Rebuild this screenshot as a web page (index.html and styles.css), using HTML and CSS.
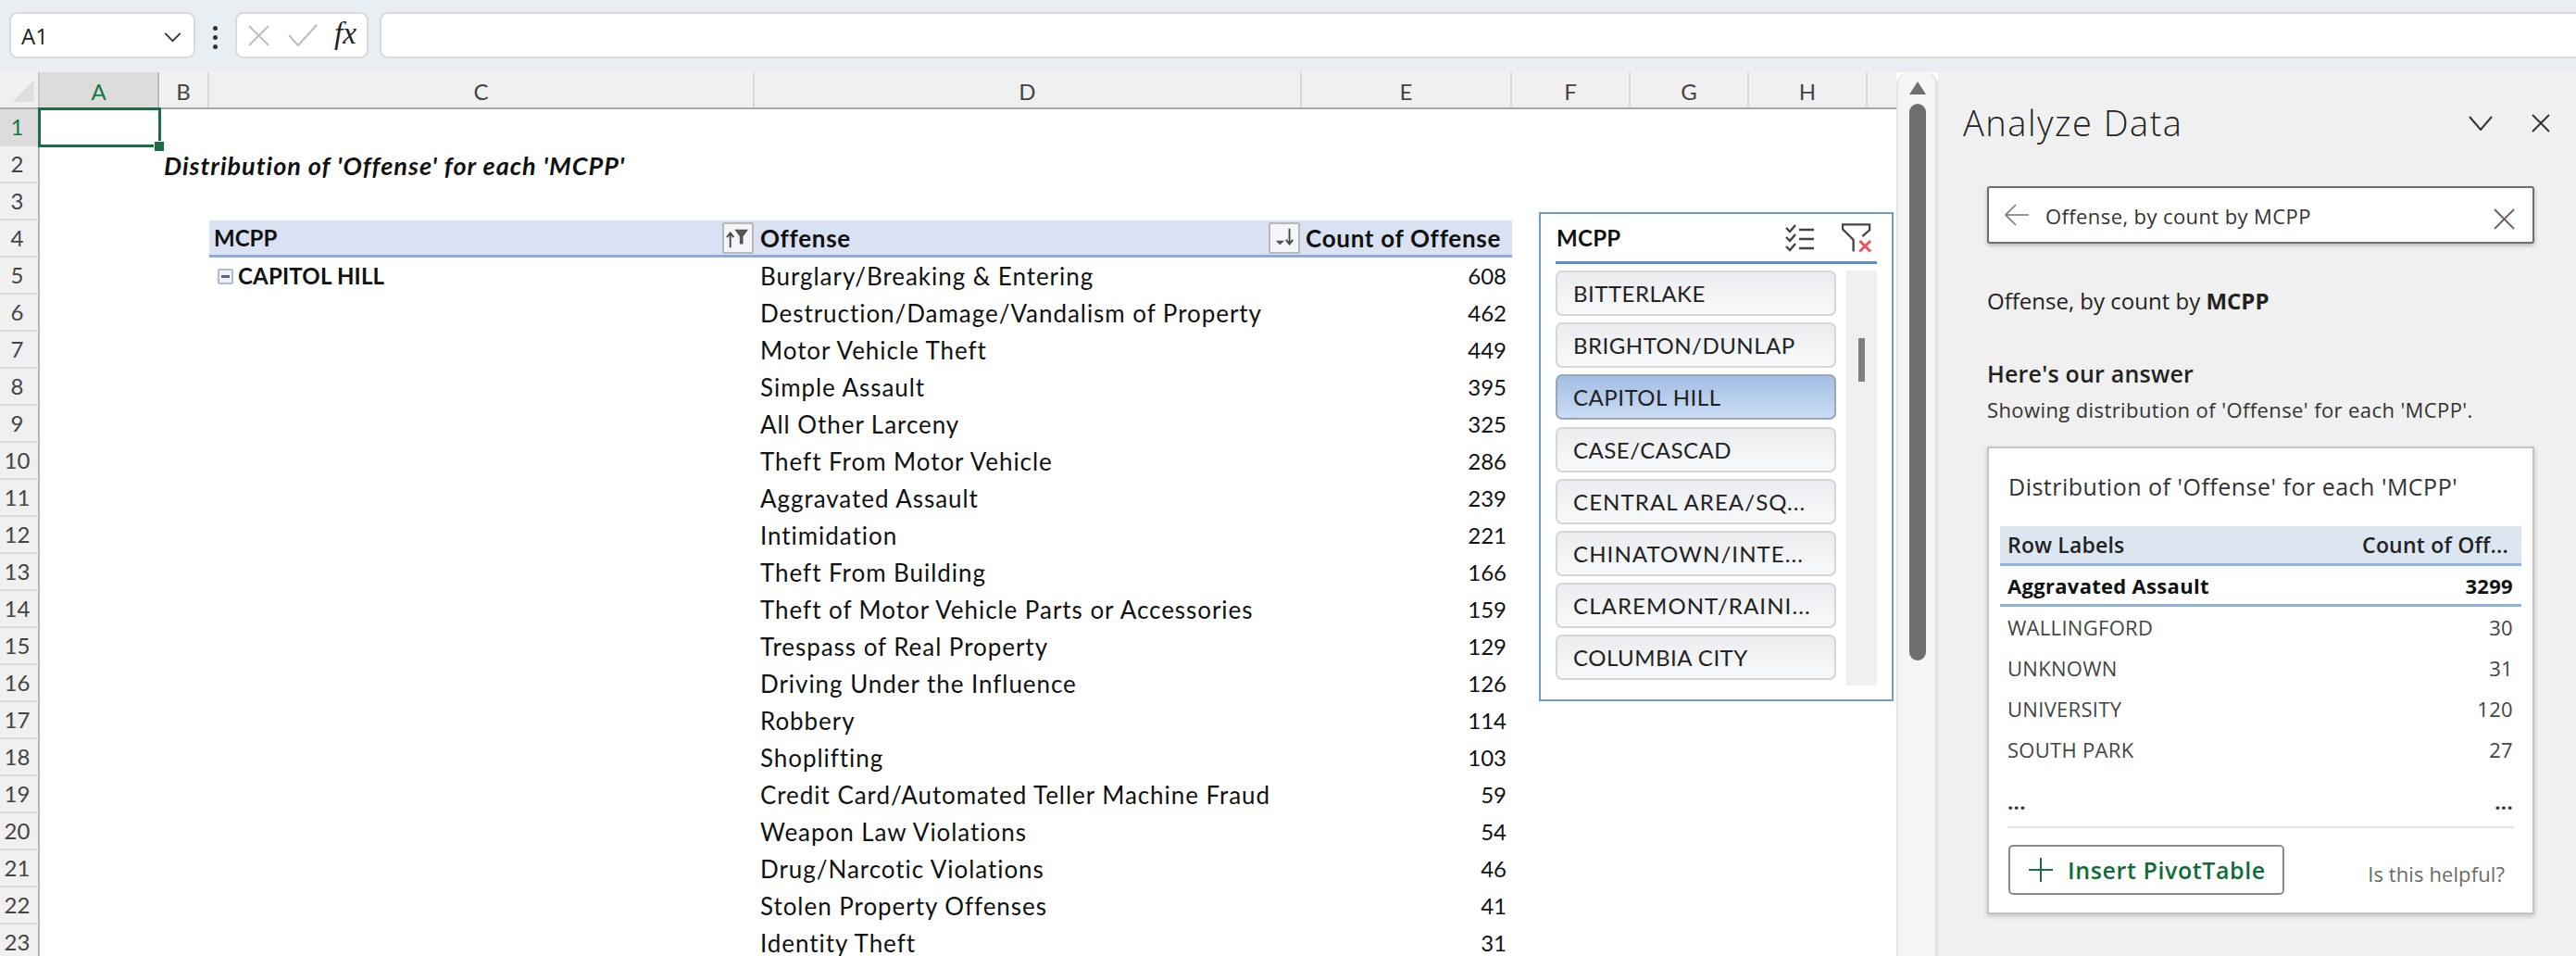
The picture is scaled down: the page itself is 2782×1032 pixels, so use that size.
FILE: index.html
```html
<!DOCTYPE html>
<html lang="en">
<head>
<meta charset="utf-8">
<title>Analyze Data</title>
<link rel="stylesheet" href="styles.css">
</head>
<body>
<header class="fbar">
  <div class="namebox"><span>A1</span>
    <svg class="ico-chev" viewBox="0 0 20 12"><path d="M1 1l9 9 9-9"/></svg>
  </div>
  <div class="dots"><i></i><i></i><i></i></div>
  <div class="fxbox">
    <svg class="ico-x" viewBox="0 0 24 24"><path d="M1 1l22 22M23 1L1 23"/></svg>
    <svg class="ico-check" viewBox="0 0 32 24"><path d="M1 12l10 11L31 1"/></svg>
    <span class="fx">fx</span>
  </div>
  <div class="finput"></div>
</header>
<main class="main">
  <section class="sheet">
    <div class="colhead">
      <div class="corner"><svg viewBox="0 0 24 24"><path d="M24 0v24H0z"/></svg></div>
      <div class="ch cha">A</div><div class="ch chb">B</div><div class="ch chc">C</div><div class="ch chd">D</div><div class="ch che">E</div><div class="ch chf">F</div><div class="ch chf">G</div><div class="ch chf">H</div><div class="ch chi"></div>
    </div>
    <div class="row"><span class="rh rh-on">1</span></div>
    <div class="row"><span class="rh">2</span><span class="gap"></span><span class="title">Distribution of 'Offense' for each 'MCPP'</span></div>
    <div class="row"><span class="rh">3</span></div>
    <div class="row"><span class="rh">4</span><span class="gap"></span>
      <span class="pv pv-c"><b>MCPP</b>
        <span class="fbtn"><svg viewBox="0 0 30 26"><path class="ar" d="M6 24V8M2 12l4-5 4 5"/><path class="fu" d="M11 3h16l-6 8v9h-4v-9z"/></svg></span></span>
      <span class="pv pv-d"><b class="wide">Offense</b>
        <span class="fbtn"><svg viewBox="0 0 30 26"><path class="fu" d="M5 16h10l-5 5z"/><path class="ar" d="M21 2v18M17 15l4 5 4-5"/></svg></span></span>
      <span class="pv pv-e"><b class="wide">Count of Offense</b></span>
    </div>
    <div class="row"><span class="rh">5</span><span class="gap"></span>
      <span class="cc"><span class="minus"></span><b>CAPITOL HILL</b></span><span class="cd">Burglary/Breaking &amp; Entering</span><span class="ce">608</span></div>
    <div class="row"><span class="rh">6</span><span class="gap"></span><span class="cc"></span><span class="cd">Destruction/Damage/Vandalism of Property</span><span class="ce">462</span></div>
    <div class="row"><span class="rh">7</span><span class="gap"></span><span class="cc"></span><span class="cd">Motor Vehicle Theft</span><span class="ce">449</span></div>
    <div class="row"><span class="rh">8</span><span class="gap"></span><span class="cc"></span><span class="cd">Simple Assault</span><span class="ce">395</span></div>
    <div class="row"><span class="rh">9</span><span class="gap"></span><span class="cc"></span><span class="cd">All Other Larceny</span><span class="ce">325</span></div>
    <div class="row"><span class="rh">10</span><span class="gap"></span><span class="cc"></span><span class="cd">Theft From Motor Vehicle</span><span class="ce">286</span></div>
    <div class="row"><span class="rh">11</span><span class="gap"></span><span class="cc"></span><span class="cd">Aggravated Assault</span><span class="ce">239</span></div>
    <div class="row"><span class="rh">12</span><span class="gap"></span><span class="cc"></span><span class="cd">Intimidation</span><span class="ce">221</span></div>
    <div class="row"><span class="rh">13</span><span class="gap"></span><span class="cc"></span><span class="cd">Theft From Building</span><span class="ce">166</span></div>
    <div class="row"><span class="rh">14</span><span class="gap"></span><span class="cc"></span><span class="cd">Theft of Motor Vehicle Parts or Accessories</span><span class="ce">159</span></div>
    <div class="row"><span class="rh">15</span><span class="gap"></span><span class="cc"></span><span class="cd">Trespass of Real Property</span><span class="ce">129</span></div>
    <div class="row"><span class="rh">16</span><span class="gap"></span><span class="cc"></span><span class="cd">Driving Under the Influence</span><span class="ce">126</span></div>
    <div class="row"><span class="rh">17</span><span class="gap"></span><span class="cc"></span><span class="cd">Robbery</span><span class="ce">114</span></div>
    <div class="row"><span class="rh">18</span><span class="gap"></span><span class="cc"></span><span class="cd">Shoplifting</span><span class="ce">103</span></div>
    <div class="row"><span class="rh">19</span><span class="gap"></span><span class="cc"></span><span class="cd">Credit Card/Automated Teller Machine Fraud</span><span class="ce">59</span></div>
    <div class="row"><span class="rh">20</span><span class="gap"></span><span class="cc"></span><span class="cd">Weapon Law Violations</span><span class="ce">54</span></div>
    <div class="row"><span class="rh">21</span><span class="gap"></span><span class="cc"></span><span class="cd">Drug/Narcotic Violations</span><span class="ce">46</span></div>
    <div class="row"><span class="rh">22</span><span class="gap"></span><span class="cc"></span><span class="cd">Stolen Property Offenses</span><span class="ce">41</span></div>
    <div class="row"><span class="rh">23</span><span class="gap"></span><span class="cc"></span><span class="cd">Identity Theft</span><span class="ce">31</span></div>

    <div class="cellsel"><i></i></div>

    <aside class="slicer">
      <div class="sl-head"><strong>MCPP</strong>
        <svg class="ico-multi" viewBox="0 0 32 30"><path d="M1 4l4 4 6-7M1 14l4 4 6-7M1 24l4 4 6-7"/><path d="M15 6h16M15 16h16M15 26h16"/></svg>
        <svg class="ico-clear" viewBox="0 0 34 32"><path class="f" d="M13 31V18L1 6V1h30v6l-8 7"/><path class="r" d="M20 19l12 12M32 19L20 31"/></svg>
      </div>
      <div class="sl-body">
        <div class="sl-list">
          <div class="sb">BITTERLAKE</div>
          <div class="sb">BRIGHTON/DUNLAP</div>
          <div class="sb sb-on">CAPITOL HILL</div>
          <div class="sb">CASE/CASCAD</div>
          <div class="sb sb-long">CENTRAL AREA/SQ...</div>
          <div class="sb sb-long">CHINATOWN/INTE...</div>
          <div class="sb sb-long">CLAREMONT/RAINI...</div>
          <div class="sb">COLUMBIA CITY</div>
        </div>
        <div class="sl-track"><div class="sl-thumb"></div></div>
      </div>
    </aside>
  </section>

  <div class="vscroll">
    <svg class="ico-up" viewBox="0 0 18 14"><path d="M9 0l9 14H0z"/></svg>
    <div class="vthumb"></div>
  </div>

  <aside class="panel">
    <div class="p-head">
      <h1>Analyze Data</h1>
      <svg class="p-chev" viewBox="0 0 26 16"><path d="M1 1l12 14L25 1"/></svg>
      <svg class="p-close" viewBox="0 0 20 20"><path d="M1 1l18 18M19 1L1 19"/></svg>
    </div>
    <div class="search">
      <svg class="s-back" viewBox="0 0 26 24"><path d="M12 1L1 12l11 11M1 12h25"/></svg>
      <span class="s-text">Offense, by count by MCPP</span>
      <svg class="s-x" viewBox="0 0 24 24"><path d="M1 1l22 22M23 1L1 23"/></svg>
    </div>
    <p class="query">Offense, by count by <b>MCPP</b></p>
    <p class="answer">Here's our answer</p>
    <p class="desc">Showing distribution of 'Offense' for each 'MCPP'.</p>
    <div class="card">
      <div class="c-title">Distribution of 'Offense' for each 'MCPP'</div>
      <div class="t-row t-head"><span>Row Labels</span><span>Count of Off...</span></div>
      <div class="t-row t-total"><span>Aggravated Assault</span><span>3299</span></div>
      <div class="t-row"><span>WALLINGFORD</span><span>30</span></div>
      <div class="t-row"><span>UNKNOWN</span><span>31</span></div>
      <div class="t-row"><span>UNIVERSITY</span><span>120</span></div>
      <div class="t-row"><span>SOUTH PARK</span><span>27</span></div>
      <div class="t-row t-more"><span>...</span><span>...</span></div>
      <div class="c-foot">
        <div class="insert">
          <svg viewBox="0 0 26 26"><path d="M13 0v26M0 13h26"/></svg>
          <span>Insert PivotTable</span>
        </div>
        <span class="helpful">Is this helpful?</span>
      </div>
    </div>
  </aside>
</main>
</body>
</html>
```
FILE: styles.css
```css
* { box-sizing: border-box; }
html, body { margin: 0; padding: 0; }
body {
  width: 2782px; height: 1032px; overflow: hidden; background: #fff;
  display: flex; flex-direction: column;
  font-family: "Lato", "Liberation Sans", sans-serif; color: #111;
}
svg { display: block; fill: none; }

/* formula bar */
.fbar {
  flex: 0 0 78px; background: #e9eef2; display: flex; align-items: flex-start;
  padding: 13px 0 0 10px;
}
.namebox, .fxbox, .finput {
  height: 50px; background: #fff; border: 2px solid #d8dadc; border-radius: 9px;
}
.namebox {
  width: 201px; display: flex; align-items: center; justify-content: space-between;
  padding: 0 13px 0 11px; font: 24px "Open Sans", sans-serif; color: #222;
}
.ico-chev { width: 19px; height: 11px; margin-top: 4px; }
.ico-chev path { stroke: #333; stroke-width: 2; }
.dots { width: 43px; display: flex; flex-direction: column; align-items: center; gap: 5px; padding-top: 15px; }
.dots i { width: 5px; height: 5px; background: #333; border-radius: 50%; }
.fxbox { width: 144px; display: flex; align-items: center; padding-left: 12px; }
.ico-x { width: 23px; height: 23px; }
.ico-x path, .ico-check path { stroke: #bdbdbd; stroke-width: 2; }
.ico-check { width: 32px; height: 24px; margin-left: 20px; }
.fx { font: italic 33px "Liberation Serif", serif; margin-left: 18px; color: #222; margin-top: -4px; }
.finput { flex: 1; margin-left: 12px; border-right: 0; border-radius: 9px 0 0 9px; }

/* layout */
.main { flex: 1; display: flex; min-height: 0; }
.sheet { position: relative; flex: 0 0 2048px; overflow: hidden; }

/* column header */
.colhead { height: 40px; display: flex; background: #f0f0f0; border-bottom: 2px solid #a9a9a9; color: #444; }
.corner { width: 43px; padding: 9px 0 0 13px; border-right: 2px solid #c6c6c6; }
.corner svg { width: 24px; height: 23px; }
.corner path { fill: #dedede; }
.ch {
  display: flex; align-items: center; justify-content: center; font-size: 24px;
  border-right: 2px solid #d9d9d9; padding-top: 2px;
}
.cha { width: 129px; background: #dcdcdc; color: #107c41; border-right-color: #bbb; }
.chb { width: 54px; }
.chc { width: 589px; }
.chd { width: 591px; }
.che { width: 227px; }
.chf { width: 128px; }
.chi { flex: 1; border-right: 0; }

/* rows */
.row { display: grid; grid-template-columns: 43px 183px 589px 591px 227px; height: 40px; font-size: 24px; line-height: 1; }
.rh {
  background: #f0f0f0; border-right: 2px solid #b4b4b4; border-bottom: 2px solid #dcdcdc;
  display: flex; align-items: center; justify-content: center; color: #444; padding-right: 4px;
}
.rh-on { background: #dcdcdc; color: #107c41; }
.title {
  grid-column: 3 / 5; display: flex; align-items: center; margin-left: -49px;
  font-size: 27px; letter-spacing: 1px; font-weight: 700; font-style: italic;
}
.pv {
  background: #d9e1f2; border-bottom: 3px solid #8ea9db; display: flex; align-items: center;
  justify-content: space-between;
}
.pv .wide { font-size: 26px; letter-spacing: .7px; }
.pv-c { padding: 0 1px 0 5px; }
.pv-d { padding: 0 2px 0 6px; }
.pv-e { padding: 0 12px 0 4px; }
.fbtn {
  width: 34px; height: 34px; background: #f4f5f8; border: 2px solid #b8b8b8; border-radius: 2px;
  display: flex; align-items: center; justify-content: center;
}
.fbtn svg { width: 28px; height: 24px; }
.fbtn .ar { stroke: #444; stroke-width: 2; }
.fbtn .fu { fill: #555; }
.cc { display: flex; align-items: center; padding-left: 9px; }
.cc b { letter-spacing: .2px; }
.minus {
  width: 17px; height: 17px; margin-right: 5px; border: 2px solid #aebbd0; border-radius: 2px;
  background: linear-gradient(#59667a, #59667a) center / 9px 3px no-repeat, #eef1f6;
}
.cd { display: flex; align-items: center; padding-left: 6px; font-size: 26px; letter-spacing: .95px; }
.ce { display: flex; align-items: center; justify-content: flex-end; padding-right: 6px; }

/* selection */
.cellsel {
  position: absolute; left: 41px; top: 38px; width: 133px; height: 43px;
  border: 3px solid #1a6e44;
}
.cellsel i { position: absolute; right: -6px; bottom: -7px; width: 10px; height: 10px; background: #1a6e44; box-shadow: 0 0 0 1px #fff; }

/* slicer */
.slicer {
  position: absolute; left: 1662px; top: 151px; width: 383px; height: 528px;
  background: #fff; border: 2px solid #6f9bd3; padding: 0 16px; font-size: 24px;
}
.sl-head { height: 54px; border-bottom: 3px solid #5b8ecb; display: flex; align-items: center; padding-left: 1px; }
.sl-head strong { flex: 1; letter-spacing: .3px; }
.ico-multi { width: 32px; height: 30px; margin-right: 29px; }
.ico-multi path { stroke: #444; stroke-width: 2.4; }
.ico-clear { width: 33px; height: 32px; margin-right: 5px; }
.ico-clear .f { stroke: #444; stroke-width: 2.4; }
.ico-clear .r { stroke: #f0505a; stroke-width: 3; }
.sl-body { display: flex; justify-content: space-between; margin-top: 7px; }
.sl-list { width: 303px; display: flex; flex-direction: column; gap: 7.2px; }
.sb {
  height: 49px; border: 2px solid #d6d6d6; border-radius: 7px; padding-left: 17px;
  display: flex; align-items: center; background: linear-gradient(#eaecef, #f8f9fa);
  color: #222; letter-spacing: .5px;
}
.sb-long { letter-spacing: 1.1px; }
.sb-on { background: linear-gradient(#a3bee3, #c9dcf5); border-color: #9aa6b8; }
.sl-track { width: 33px; height: 448px; background: #f0f0f0; padding: 73px 0 0 13px; }
.sl-thumb { width: 7px; height: 47px; background: #7f7f7f; }

/* main scrollbar */
.vscroll {
  flex: 0 0 45px; background: #f5f5f5; border-left: 2px solid #e2e6ea; border-right: 3px solid #dde3ea;
  border-radius: 14px 14px 0 0; padding: 10px 0 0 12px;
}
.ico-up { width: 18px; height: 14px; }
.ico-up path { fill: #6f6f6f; }
.vthumb { width: 18px; height: 601px; background: #6f6f6f; border-radius: 9px; margin-top: 10px; }

/* panel */
.panel { flex: 1; background: #f0f0f0; padding: 0 45px 0 53px; font-family: "Open Sans", sans-serif; color: #222; }
.panel p { margin: 0; }
.p-head { height: 110px; margin: 0 -45px 0 -26px; display: flex; align-items: center; position: relative; }
.p-head h1 { margin: 0 0 3px; flex: 1; font-size: 38px; letter-spacing: 1.5px; font-weight: 300; color: #222; }
.p-chev { width: 26px; height: 16px; margin-right: 42px; }
.p-chev path, .p-close path { stroke: #333; stroke-width: 2; }
.p-close { width: 20px; height: 20px; margin-right: 28px; }
.search {
  height: 62px; margin-top: 13px; background: #fff; border: 2px solid #6e6e6e; border-radius: 3px;
  box-shadow: 0 2px 4px rgba(0,0,0,.25); display: flex; align-items: center; padding-left: 17px;
}
.s-back { width: 26px; height: 24px; margin-right: 18px; }
.s-back path { stroke: #777; stroke-width: 1.6; }
.s-text { flex: 1; font-size: 22px; letter-spacing: .4px; color: #333; padding-top: 1px; }
.s-x { width: 23px; height: 23px; margin: 9px 19px 0 0; }
.s-x path { stroke: #6f5f6f; stroke-width: 2; }
.query { margin-top: 42px !important; line-height: 40px; font-size: 24px; }
.answer { margin-top: 38px !important; line-height: 40px; font-size: 25px; letter-spacing: .2px; font-weight: 600; }
.desc { margin-top: 4px !important; line-height: 30px; font-size: 22px; letter-spacing: .4px; color: #333; }
.card {
  margin-top: 25px; height: 505px; background: #fff; border: 2px solid #c4c4c4;
  box-shadow: 0 2px 5px rgba(0,0,0,.2); padding: 21px 12px 0;
}
.c-title { line-height: 40px; font-size: 25px; letter-spacing: .5px; padding-left: 9px; margin-bottom: 23px; color: #333; }
.t-row { height: 44px; display: flex; align-items: center; justify-content: space-between; padding: 0 9px 0 8px; font-size: 22px; letter-spacing: .3px; color: #444; }
.t-head { height: 43px; padding-right: 14px; background: #dce6f1; border-bottom: 3px solid #8db2dd; font-size: 23px; letter-spacing: .2px; font-weight: 600; color: #222; }
.t-total { border-bottom: 3px solid #8db2dd; font-weight: 700; color: #111; }
.t-more { margin-top: 12px; color: #333; font-weight: 700; }
.c-foot {
  margin: 5px 8px 0; padding-top: 18px; border-top: 2px solid #e2e2e2; display: flex;
  justify-content: space-between; align-items: flex-start;
}
.insert {
  width: 298px; height: 54px; margin-left: 1px; border: 2px solid #8a8a8a; border-radius: 5px; display: flex; align-items: center;
  padding-left: 20px; color: #0f6b3a; font-size: 25px; letter-spacing: .6px; font-weight: 600; background: #fff;
}
.insert svg { width: 26px; height: 26px; margin-right: 16px; }
.insert path { stroke: #1d6f42; stroke-width: 2; }
.helpful { font-size: 22px; letter-spacing: .1px; color: #6a6a6a; margin: 16px 10px 0 0; }
```
